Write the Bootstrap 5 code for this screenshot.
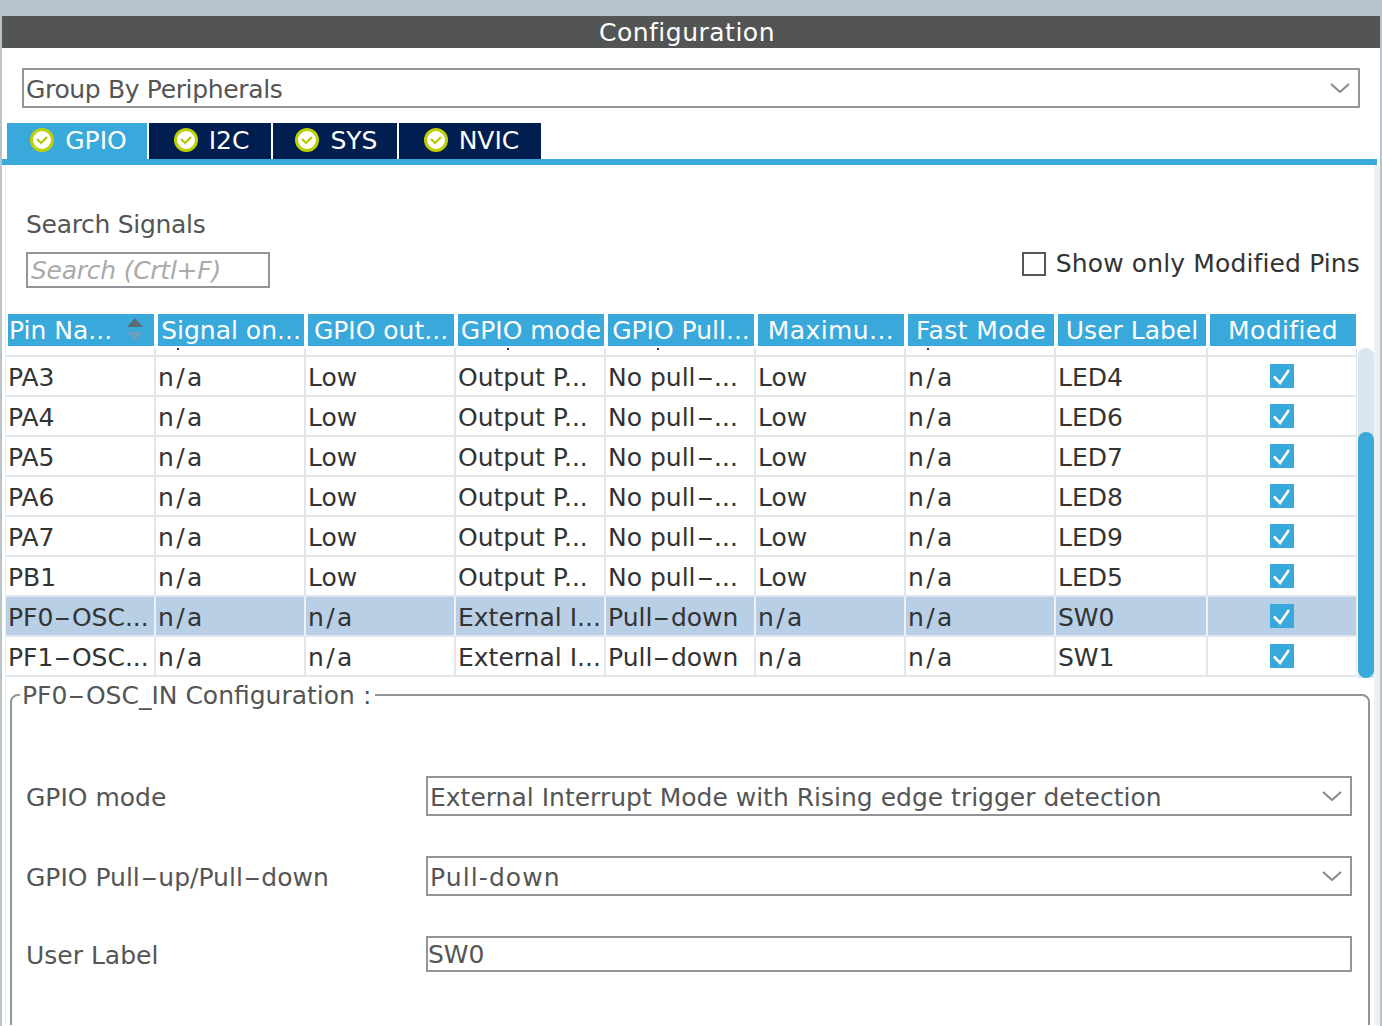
<!DOCTYPE html>
<html lang="en">
<head>
<meta charset="utf-8">
<title>Configuration</title>
<link rel="stylesheet" href="https://cdn.jsdelivr.net/npm/bootstrap@5.3.0/dist/css/bootstrap.min.css">
<style>
html,body{height:1026px;overflow:hidden}
body{background:#b8c4cb;padding:16px 2px 0;font-family:"DejaVu Sans",sans-serif;font-size:25px;letter-spacing:0;color:#555}
.shell{height:1010px;background:#fff;overflow:hidden}
.titlebar{height:32px;background:#535554;color:#fff;line-height:32px;padding-top:1px;text-align:center;letter-spacing:.5px;padding-right:8px}
.sel{display:block;width:100%;height:40px;border:2px solid #8f9598;border-radius:0;padding:3px 40px 0 2px;font-size:25px;color:#555;line-height:34px;font-family:inherit;
background-image:url("data:image/svg+xml,%3Csvg xmlns='http://www.w3.org/2000/svg' viewBox='0 0 20 10'%3E%3Cpath d='M1 1l9 8 9-8' fill='none' stroke='%23888' stroke-width='2'/%3E%3C/svg%3E");background-size:20px 10px;background-position:right 8px center}
.sel:focus,.txt:focus{box-shadow:none;border-color:#8f9598}
.top-sel{margin:20px 20px 0;width:1338px;letter-spacing:-.35px}
.sel.spaced{letter-spacing:1.1px}
.tabs{margin:15px 0 0 5px;gap:2px;height:36px}
.tabs .nav-link{height:36px;padding:0;display:flex;align-items:center;justify-content:center;gap:10px;background:#001e50;color:#fff;border-radius:0;line-height:36px}
.tabs .nav-link.active{background:#39a9dc;color:#fff}
.t1{width:140px}.t2{width:122px}.t3{width:124px}.t4{width:142px}
.tabline{height:6px;background:#39a9dc;margin-right:3px}
.body-area{margin:0 0 0 3px;border-left:1px solid #eef0f3;border-right:6px solid #eef0f3;height:860px;overflow:hidden}
.search-row{padding:0 14px 26px 20px;height:149px}
.search-lbl{line-height:32px;margin-bottom:11px;letter-spacing:-.3px;padding-top:1px}
.txt{border:2px solid #8f9598;border-radius:0;padding:2px 0 0;height:36px;font-size:25px;color:#555;font-family:inherit}
.txt::placeholder{color:#aaa;font-style:italic}
.search-input{width:244px;padding-left:3px;letter-spacing:-.25px}
.chkwrap{margin-bottom:6px;gap:10px}
.chk{width:24px;height:24px;border:2px solid #555;background:#fff;flex:none}
.chk-lbl{color:#333;line-height:36px;letter-spacing:.13px;padding-top:1px}
.heads{display:flex;gap:4px;padding-left:2px;height:32px}
.hcell{width:146px;background:#39a9dc;color:#fff;text-align:center;line-height:31px;padding-top:1px;white-space:nowrap;position:relative}
.hcell.wide{letter-spacing:.4px}
.hcell.hc8{width:148px}
.hcell.hc1{text-align:left;padding-left:1px}
.sorter{position:absolute;right:11px;top:4px}
.scrollrow{display:flex;margin-top:2px;height:329px}
.clip{width:1351px;overflow:hidden;height:329px}
.pins{table-layout:fixed;width:1351px;border-collapse:separate;border-spacing:0;color:#333}
.pins td{height:40px;padding:3px 0 0 2px;border-bottom:2px solid #e2e6ea;border-right:2px solid #e2e6ea;white-space:nowrap;overflow:hidden;vertical-align:middle;line-height:35px}
.pins td.na{letter-spacing:2.4px}
.pins tr.sel-row td{background:#b8cfe6;border-right-color:#eef2f7;border-bottom-color:#e2e6ea}
.pins tr.sliver td{height:9px;padding:0;line-height:0;vertical-align:top}
.tick{display:block;width:2px;height:2px;background:#333}
.tick.t21{margin-left:21px}
.tick.t51{margin-left:51px}
.pins col{width:150px}
.pins col.c8{width:152px}
.pins td.ck{padding:0;text-align:center}
.box{display:block;margin:0 auto;width:24px;height:24px}
.hy{display:inline-block;width:.74em;text-align:center;transform:scaleX(1.9)}
.sbar{width:16px;margin-left:1px;height:330px;background:#d8e6f4;border-radius:8px 8px 0 0}
.thumb{height:246px;margin-top:84px;background:#39a9dc;border-radius:8px}
.conf{margin:0 4px;border:2px solid #8f9598;border-radius:8px;padding:0 16px 0 14px;min-height:420px}
.conf legend{float:none;width:auto;font-size:25px;margin:0 0 0 -6px;padding:1px 4px 0 2px;line-height:35px;height:36px}
.frow{display:flex;align-items:center;height:40px;margin-bottom:40px}
.frow:first-of-type{margin-top:63px}
.frow.short{height:36px}
.flbl{width:400px;flex:none;padding-top:3px}
.fctl{flex:1 1 auto;min-width:0}
.frow .txt{height:36px;width:100%;display:block}
</style>
</head>
<body>
<div class="shell">
  <div class="titlebar">Configuration</div>
  <select class="form-select sel top-sel"><option>Group By Peripherals</option></select>

  <ul class="nav tabs">
    <li class="nav-item"><a class="nav-link active t1" href="#"><svg width="28" height="26" viewBox="0 0 28 26"><circle cx="15" cy="12" r="10.5" fill="#fff" stroke="#bfd000" stroke-width="3"/><path d="M10 11l4 4 6-6" fill="none" stroke="#b5c800" stroke-width="2.2"/></svg>GPIO</a></li>
    <li class="nav-item"><a class="nav-link t2" href="#"><svg width="28" height="26" viewBox="0 0 28 26"><circle cx="15" cy="12" r="10.5" fill="#fff" stroke="#bfd000" stroke-width="3"/><path d="M10 11l4 4 6-6" fill="none" stroke="#b5c800" stroke-width="2.2"/></svg>I2C</a></li>
    <li class="nav-item"><a class="nav-link t3" href="#"><svg width="28" height="26" viewBox="0 0 28 26"><circle cx="15" cy="12" r="10.5" fill="#fff" stroke="#bfd000" stroke-width="3"/><path d="M10 11l4 4 6-6" fill="none" stroke="#b5c800" stroke-width="2.2"/></svg>SYS</a></li>
    <li class="nav-item"><a class="nav-link t4" href="#"><svg width="28" height="26" viewBox="0 0 28 26"><circle cx="15" cy="12" r="10.5" fill="#fff" stroke="#bfd000" stroke-width="3"/><path d="M10 11l4 4 6-6" fill="none" stroke="#b5c800" stroke-width="2.2"/></svg>NVIC</a></li>
  </ul>
  <div class="tabline"></div>

  <div class="body-area">
    <div class="search-row d-flex justify-content-between align-items-end">
      <div>
        <div class="search-lbl">Search Signals</div>
        <input class="form-control txt search-input" placeholder="Search (Crtl+F)">
      </div>
      <div class="d-flex align-items-center chkwrap">
        <span class="chk"></span><span class="chk-lbl">Show only Modified Pins</span>
      </div>
    </div>

    <div class="heads">
      <div class="hcell hc1">Pin Na...<svg class="sorter" width="16" height="24" viewBox="0 0 16 24"><path d="M8 0l8 9H0z" fill="#5c6b74"/><path d="M8 23l8-9H0z" fill="#6a9fc0"/></svg></div>
      <div class="hcell">Signal on...</div>
      <div class="hcell">GPIO out...</div>
      <div class="hcell">GPIO mode</div>
      <div class="hcell">GPIO Pull...</div>
      <div class="hcell wide">Maximu...</div>
      <div class="hcell wide">Fast Mode</div>
      <div class="hcell hc8">User Label</div>
      <div class="hcell wide">Modified</div>
    </div>

    <div class="scrollrow">
      <div class="clip">
        <table class="pins">
          <colgroup><col><col><col><col><col><col><col><col class="c8"><col></colgroup>
          <tbody>
            <tr class="sliver"><td></td><td><i class="tick t21"></i></td><td></td><td><i class="tick t51"></i></td><td><i class="tick t51"></i></td><td></td><td><i class="tick t21"></i></td><td></td><td></td></tr>
            <tr><td>PA3</td><td class="na">n/a</td><td>Low</td><td>Output P...</td><td>No pull<span class="hy">-</span>...</td><td>Low</td><td class="na">n/a</td><td>LED4</td><td class="ck"><svg class="box" viewBox="0 0 24 24"><rect width="24" height="24" fill="#39a9dc"/><path d="M4 12.5l6 6.5 9-13" fill="none" stroke="#fff" stroke-width="2.6"/></svg></td></tr>
            <tr><td>PA4</td><td class="na">n/a</td><td>Low</td><td>Output P...</td><td>No pull<span class="hy">-</span>...</td><td>Low</td><td class="na">n/a</td><td>LED6</td><td class="ck"><svg class="box" viewBox="0 0 24 24"><rect width="24" height="24" fill="#39a9dc"/><path d="M4 12.5l6 6.5 9-13" fill="none" stroke="#fff" stroke-width="2.6"/></svg></td></tr>
            <tr><td>PA5</td><td class="na">n/a</td><td>Low</td><td>Output P...</td><td>No pull<span class="hy">-</span>...</td><td>Low</td><td class="na">n/a</td><td>LED7</td><td class="ck"><svg class="box" viewBox="0 0 24 24"><rect width="24" height="24" fill="#39a9dc"/><path d="M4 12.5l6 6.5 9-13" fill="none" stroke="#fff" stroke-width="2.6"/></svg></td></tr>
            <tr><td>PA6</td><td class="na">n/a</td><td>Low</td><td>Output P...</td><td>No pull<span class="hy">-</span>...</td><td>Low</td><td class="na">n/a</td><td>LED8</td><td class="ck"><svg class="box" viewBox="0 0 24 24"><rect width="24" height="24" fill="#39a9dc"/><path d="M4 12.5l6 6.5 9-13" fill="none" stroke="#fff" stroke-width="2.6"/></svg></td></tr>
            <tr><td>PA7</td><td class="na">n/a</td><td>Low</td><td>Output P...</td><td>No pull<span class="hy">-</span>...</td><td>Low</td><td class="na">n/a</td><td>LED9</td><td class="ck"><svg class="box" viewBox="0 0 24 24"><rect width="24" height="24" fill="#39a9dc"/><path d="M4 12.5l6 6.5 9-13" fill="none" stroke="#fff" stroke-width="2.6"/></svg></td></tr>
            <tr><td>PB1</td><td class="na">n/a</td><td>Low</td><td>Output P...</td><td>No pull<span class="hy">-</span>...</td><td>Low</td><td class="na">n/a</td><td>LED5</td><td class="ck"><svg class="box" viewBox="0 0 24 24"><rect width="24" height="24" fill="#39a9dc"/><path d="M4 12.5l6 6.5 9-13" fill="none" stroke="#fff" stroke-width="2.6"/></svg></td></tr>
            <tr class="sel-row"><td>PF0<span class="hy">-</span>OSC...</td><td class="na">n/a</td><td class="na">n/a</td><td>External I...</td><td>Pull<span class="hy">-</span>down</td><td class="na">n/a</td><td class="na">n/a</td><td>SW0</td><td class="ck"><svg class="box" viewBox="0 0 24 24"><rect width="24" height="24" fill="#39a9dc"/><path d="M4 12.5l6 6.5 9-13" fill="none" stroke="#fff" stroke-width="2.6"/></svg></td></tr>
            <tr><td>PF1<span class="hy">-</span>OSC...</td><td class="na">n/a</td><td class="na">n/a</td><td>External I...</td><td>Pull<span class="hy">-</span>down</td><td class="na">n/a</td><td class="na">n/a</td><td>SW1</td><td class="ck"><svg class="box" viewBox="0 0 24 24"><rect width="24" height="24" fill="#39a9dc"/><path d="M4 12.5l6 6.5 9-13" fill="none" stroke="#fff" stroke-width="2.6"/></svg></td></tr>
          </tbody>
        </table>
      </div>
      <div class="sbar"><div class="thumb"></div></div>
    </div>

    <fieldset class="conf">
      <legend>PF0<span class="hy">-</span>OSC_IN Configuration :</legend>
      <div class="frow"><div class="flbl">GPIO mode</div><div class="fctl"><select class="form-select sel"><option>External Interrupt Mode with Rising edge trigger detection</option></select></div></div>
      <div class="frow"><div class="flbl">GPIO Pull<span class="hy">-</span>up/Pull<span class="hy">-</span>down</div><div class="fctl"><select class="form-select sel spaced"><option>Pull-down</option></select></div></div>
      <div class="frow short"><div class="flbl">User Label</div><div class="fctl"><input class="form-control txt" value="SW0"></div></div>
    </fieldset>
  </div>
</div>
<script src="https://cdn.jsdelivr.net/npm/bootstrap@5.3.0/dist/js/bootstrap.bundle.min.js"></script>
</body>
</html>
